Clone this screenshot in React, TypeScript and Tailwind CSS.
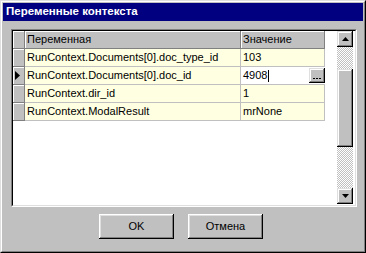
import React from 'react';

const rows = [
  { name: 'RunContext.Documents[0].doc_type_id', value: '103' },
  { name: 'RunContext.Documents[0].doc_id', value: '4908', editing: true },
  { name: 'RunContext.dir_id', value: '1' },
  { name: 'RunContext.ModalResult', value: 'mrNone' },
];

const raised =
  'bg-[#c0c0c0] shadow-[inset_-1px_-1px_#000,inset_1px_1px_#dfdfdf,inset_-2px_-2px_#808080,inset_2px_2px_#fff]';

function Arrow({ down }: { down?: boolean }) {
  return (
    <svg width="7" height="4" viewBox="0 0 7 4" className="block">
      <polygon points={down ? '0,0 7,0 3.5,4' : '3.5,0 7,4 0,4'} fill="#000" />
    </svg>
  );
}

export default function App() {
  return (
    <div className="w-[366px] h-[253px] bg-[#c0c0c0] border border-t-[#dfdfdf] border-l-[#dfdfdf] border-r-black border-b-black font-['Liberation_Sans',Arial,sans-serif] text-black">
      <div className="h-full border border-t-white border-l-white border-r-[#808080] border-b-[#808080] p-px flex flex-col">
        {/* Title bar */}
        <div className="h-[18px] shrink-0 bg-[#000080] text-white font-bold text-[11.5px] pl-[3px] flex items-center leading-none">
          Переменные контекста
        </div>

        {/* Grid */}
        <div className="mt-[8px] ml-[8px] w-[346px] h-[178px] border border-t-[#808080] border-l-[#808080] border-r-white border-b-white">
          <div className="h-full border border-t-black border-l-black border-r-[#dfdfdf] border-b-[#dfdfdf] flex bg-white">
            <div className="flex-1 flex flex-col text-[11px] leading-none">
              {/* Header */}
              <div className="flex h-[18px]">
                <div className="w-[12px] border-r border-b border-[#808080] shadow-[inset_1px_1px_#fff] bg-[#c0c0c0]" />
                <div className="w-[216px] border-r border-b border-[#808080] shadow-[inset_1px_1px_#fff] bg-[#c0c0c0] flex items-center px-[2px]">
                  Переменная
                </div>
                <div className="w-[84px] border-r border-b border-[#808080] shadow-[inset_1px_1px_#fff] bg-[#c0c0c0] flex items-center px-[2px]">
                  Значение
                </div>
              </div>
              {rows.map((r) => (
                <div key={r.name} className="flex h-[18px]">
                  <div className="w-[12px] border-r border-b border-[#808080] shadow-[inset_1px_1px_#fff] bg-[#c0c0c0] flex items-center pl-[2px]">
                    {r.editing && (
                      <svg width="5" height="9" viewBox="0 0 5 9" className="block">
                        <polygon points="0,0 5,4.5 0,9" fill="#000" />
                      </svg>
                    )}
                  </div>
                  <div className="w-[216px] border-r border-b border-[#c0c0c0] bg-[#ffffe1] flex items-center px-[2px] whitespace-nowrap overflow-hidden">
                    {r.name}
                  </div>
                  {r.editing ? (
                    <div className="w-[84px] border-b border-[#c0c0c0] bg-white flex items-center justify-between pl-[2px]">
                      <span className="flex items-center">
                        4908
                        <span className="w-px h-[12px] bg-black ml-px" />
                      </span>
                      <div className={`${raised} w-[16px] h-[15px] flex items-end justify-center pb-[4px]`}>
                        <span className="w-[2px] h-px bg-black" />
                        <span className="w-[2px] h-px bg-black ml-px" />
                        <span className="w-[2px] h-px bg-black ml-px" />
                      </div>
                    </div>
                  ) : (
                    <div className="w-[84px] border-r border-b border-[#c0c0c0] bg-[#ffffe1] flex items-center px-[2px]">
                      {r.value}
                    </div>
                  )}
                </div>
              ))}
            </div>

            {/* Scrollbar */}
            <div className="w-[16px] mr-[2px] mb-px flex flex-col">
              <div className={`${raised} h-[16px] flex items-center justify-center`}>
                <Arrow />
              </div>
              <div className="h-[22px] bg-[repeating-conic-gradient(#c0c0c0_0_25%,#fff_0_50%)] bg-[length:2px_2px]" />
              <div className={`${raised} h-[78px]`} />
              <div className="flex-1 bg-[repeating-conic-gradient(#c0c0c0_0_25%,#fff_0_50%)] bg-[length:2px_2px]" />
              <div className={`${raised} h-[16px] flex items-center justify-center`}>
                <Arrow down />
              </div>
            </div>
          </div>
        </div>

        {/* Buttons */}
        <div className="mt-[7px] ml-[96px] flex gap-[14px] text-[11px]">
          <button className="w-[75px] h-[25px] bg-[#c0c0c0] shadow-[inset_-1px_-1px_#000,inset_1px_1px_#fff,inset_-2px_-2px_#808080,inset_2px_2px_#dfdfdf] flex items-center justify-center">
            OK
          </button>
          <button className="w-[75px] h-[25px] bg-[#c0c0c0] shadow-[inset_-1px_-1px_#000,inset_1px_1px_#fff,inset_-2px_-2px_#808080,inset_2px_2px_#dfdfdf] flex items-center justify-center">
            Отмена
          </button>
        </div>
      </div>
    </div>
  );
}
